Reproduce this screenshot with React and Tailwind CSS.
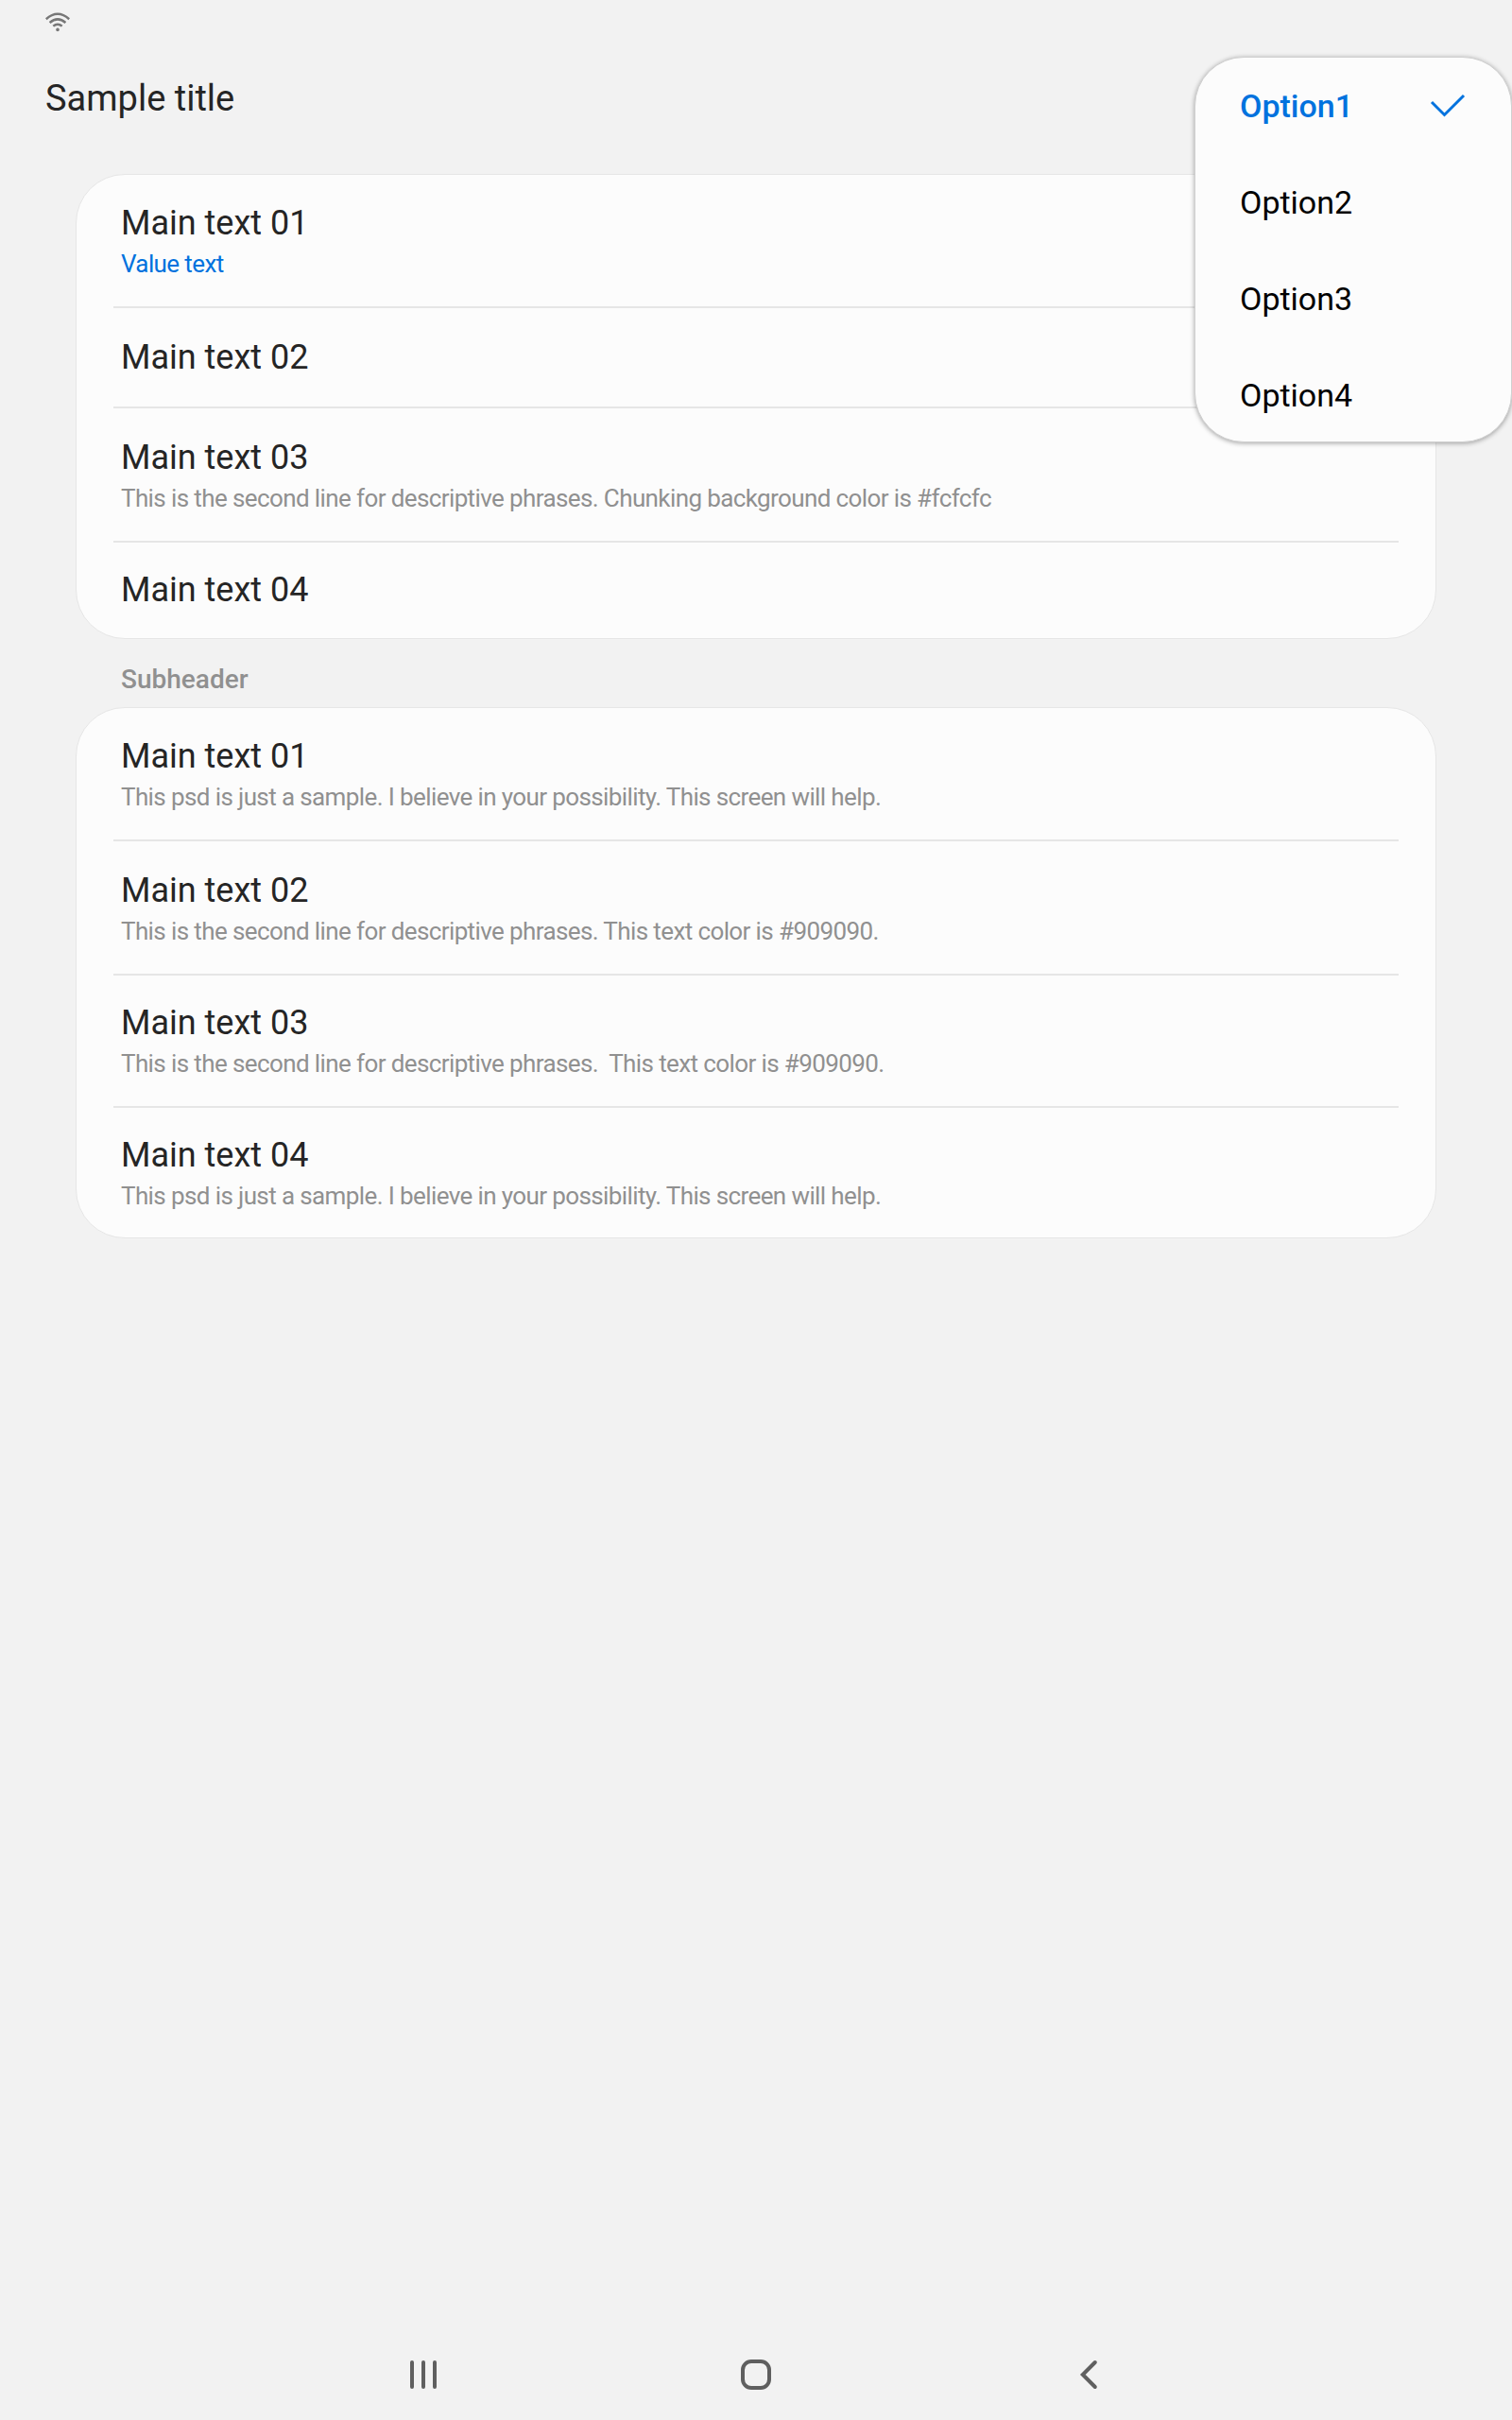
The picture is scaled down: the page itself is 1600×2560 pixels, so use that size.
const cards = [
  {
    className: "h-[492px]",
    rows: [
      { title: "Main text 01", value: "Value text", blue: true, className: "h-[141px] pt-[29px] border-b-2" },
      { title: "Main text 02", className: "h-[106px] pt-[30px] border-b-2" },
      { title: "Main text 03", value: "This is the second line for descriptive phrases. Chunking background color is #fcfcfc", className: "h-[142px] pt-[30px] border-b-2" },
      { title: "Main text 04", className: "h-[100px] pt-[28px]" },
    ],
  },
  {
    header: "Subheader",
    className: "h-[562px]",
    rows: [
      { title: "Main text 01", value: "This psd is just a sample. I believe in your possibility. This screen will help.", className: "h-[141px] pt-[29px] border-b-2" },
      { title: "Main text 02", value: "This is the second line for descriptive phrases. This text color is #909090.", className: "h-[142px] pt-[30px] border-b-2" },
      { title: "Main text 03", value: "This is the second line for descriptive phrases.  This text color is #909090.", className: "h-[140px] pt-[28px] border-b-2" },
      { title: "Main text 04", value: "This psd is just a sample. I believe in your possibility. This screen will help.", className: "h-[137px] pt-[28px]" },
    ],
  },
];

function Row({ row }) {
  return (
    <div className={`mx-[39px] border-[#e6e6e6] pl-[8px] ${row.className}`}>
      <div className="text-[36px] leading-[44px] text-[#252525]">{row.title}</div>
      {row.value && (
        <div className={`mt-[3px] whitespace-pre text-[26px] leading-[36px] tracking-[-0.61px] ${row.blue ? "text-[#0072de]" : "text-[#909090]"}`}>
          {row.value}
        </div>
      )}
    </div>
  );
}

function Menu() {
  return (
    <div className="absolute left-[1264px] top-[60px] h-[408px] w-[336px] rounded-[52px] border border-[#d0d0d0] bg-[#fcfcfc] text-[34px] leading-[102px] text-black shadow-[0_1px_5px_rgba(0,0,0,0.35)]">
      <div className="flex h-[102px] items-center justify-between pl-[47px] pr-[48px] font-medium text-[#0072de]">
        <span>Option1</span>
        <svg width="38" height="26" viewBox="0 0 38 26" fill="none" stroke="#0072de" strokeWidth="3">
          <path d="M2 9L15.5 22.5L36 2" />
        </svg>
      </div>
      {["Option2", "Option3", "Option4"].map((o) => (
        <div key={o} className="h-[102px] pl-[47px]">{o}</div>
      ))}
    </div>
  );
}

export default function App() {
  return (
    <div className="relative flex h-[2560px] w-[1600px] flex-col bg-[#f2f2f2] font-[Roboto,sans-serif]">
      <header className="h-[184px] pl-[48px] pt-[13px]">
        <svg width="26" height="21" viewBox="0 0 26 21" fill="none" stroke="#777" strokeWidth="2.5">
          <path d="M0.8 7.2Q13 -3.6 25.2 7.2" />
          <path d="M4.6 11Q13 3.8 21.4 11" />
          <path d="M8.3 14.6Q13 10.8 17.7 14.6" />
          <circle cx="13" cy="18.4" r="1.8" fill="#777" stroke="none" />
        </svg>
        <h1 className="mt-[48px] text-[38px] leading-[44px] text-[#252525]">Sample title</h1>
      </header>
      <main className="flex-1 px-[80px]">
        {cards.map((card, i) => (
          <section key={i}>
            {card.header && (
              <h2 className="h-[72px] pl-[48px] pt-[25px] text-[28px] font-medium leading-[36px] text-[#909090]">{card.header}</h2>
            )}
            <div className={`overflow-hidden rounded-[52px] border border-[#e6e6e6] bg-[#fcfcfc] ${card.className}`}>
              {card.rows.map((r) => <Row key={r.title} row={r} />)}
            </div>
          </section>
        ))}
      </main>
      <Menu />
      <nav className="flex h-[96px] items-center justify-center gap-[316px]">
        <svg width="36" height="36" viewBox="0 0 36 36" fill="none" stroke="#5f5f5f" strokeWidth="4" strokeLinecap="round">
          <path d="M6 5V31M18 5V31M30 5V31" />
        </svg>
        <svg width="36" height="36" viewBox="0 0 36 36" fill="none" stroke="#5f5f5f" strokeWidth="4">
          <rect x="4" y="4" width="28" height="28" rx="9" />
        </svg>
        <svg width="36" height="36" viewBox="0 0 36 36" fill="none" stroke="#5f5f5f" strokeWidth="4" strokeLinecap="round">
          <path d="M24.8 5L11.8 18L24.8 31" />
        </svg>
      </nav>
    </div>
  );
}
